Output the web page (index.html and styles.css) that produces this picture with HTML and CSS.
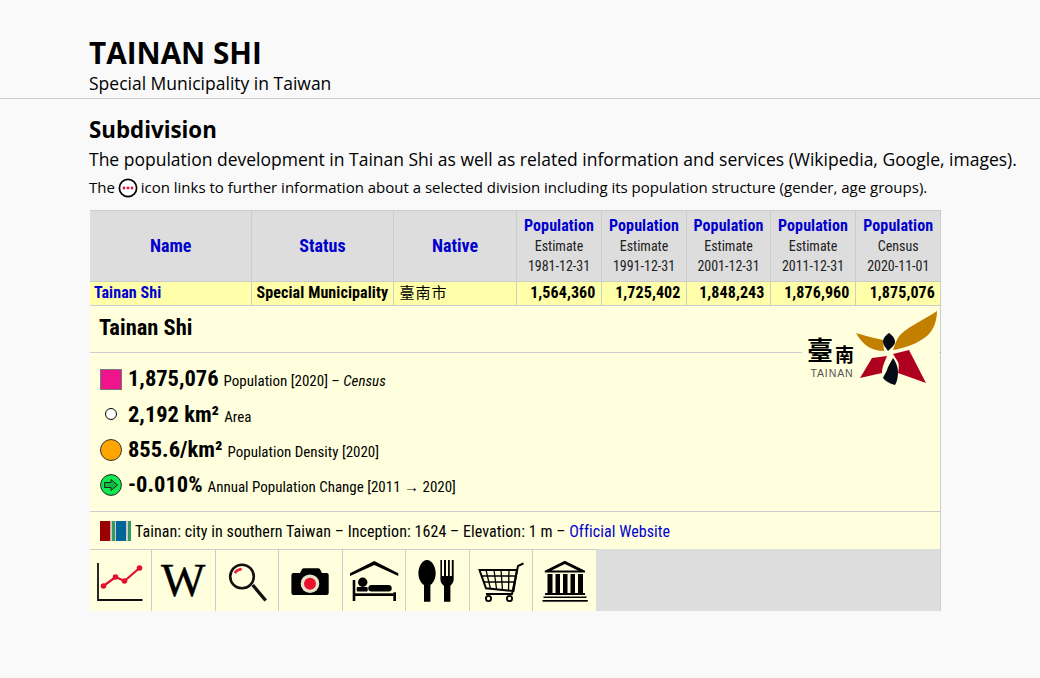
FILE: index.html
```html
<!DOCTYPE html>
<html lang="en">
<head>
<meta charset="UTF-8" />
<title>Tainan Shi</title>
<link rel="stylesheet" href="styles.css">
</head>
<body>

<header class="top">
  <h1>TAINAN SHI</h1>
  <div class="sub">Special Municipality in Taiwan</div>
</header>

<main class="content">
  <h2>Subdivision</h2>
  <p class="intro">The population development in Tainan Shi as well as related information and services (Wikipedia, Google, images).</p>
  <p class="note">The
    <svg class="more" width="20" height="20" viewBox="0 0 20 20"><circle cx="10" cy="10" r="8.6" fill="#fff" stroke="#000" stroke-width="1.7"/><circle cx="6" cy="10" r="1.4" fill="#e0103a"/><circle cx="10" cy="10" r="1.4" fill="#e0103a"/><circle cx="14" cy="10" r="1.4" fill="#e0103a"/></svg>
    icon links to further information about a selected division including its population structure (gender, age groups).</p>

  <div class="box">
    <table class="data">
      <colgroup>
        <col class="c-name"><col class="c-status"><col class="c-native">
        <col class="c-pop"><col class="c-pop"><col class="c-pop-narrow"><col class="c-pop"><col class="c-pop">
      </colgroup>
      <thead>
        <tr>
          <th><a href="#" class="big">Name</a></th>
          <th><a href="#" class="big">Status</a></th>
          <th><a href="#" class="big">Native</a></th>
          <th><a href="#">Population</a><span>Estimate</span><span>1981-12-31</span></th>
          <th><a href="#">Population</a><span>Estimate</span><span>1991-12-31</span></th>
          <th><a href="#">Population</a><span>Estimate</span><span>2001-12-31</span></th>
          <th><a href="#">Population</a><span>Estimate</span><span>2011-12-31</span></th>
          <th><a href="#">Population</a><span>Census</span><span>2020-11-01</span></th>
        </tr>
      </thead>
      <tbody>
        <tr>
          <td class="name"><a href="#">Tainan Shi</a></td>
          <td class="status">Special Municipality</td>
          <td class="native">臺南市</td>
          <td class="num">1,564,360</td>
          <td class="num">1,725,402</td>
          <td class="num">1,848,243</td>
          <td class="num">1,876,960</td>
          <td class="num">1,875,076</td>
        </tr>
      </tbody>
    </table>

    <section class="detail">
      <h3>Tainan Shi</h3>

      <div class="logo">
        <div class="logo-text"><span class="logo-cn"><span class="logo-tai">臺</span><span class="logo-nan">南</span></span><span class="logo-en">TAINAN</span></div>
        <!-- coordinates: page position minus (855,310) -->
        <svg width="84" height="76" viewBox="0 0 84 76">
          <path d="M1 23C10 26 20 28 28 30L29 41C18 41 8 36 1 23Z" fill="#c38000"/>
          <path d="M82 1C82 10 79 20 72 26C62 34 50 38 38 40C40 34 42 28 46 24C56 15 70 9 82 1Z" fill="#c38000"/>
          <path d="M34 23C37 25 40 28 40 32C40 35 36 38 33 41C31 38 28 35 28 32C28 28 31 25 34 23Z" fill="#050a14"/>
          <path d="M32 46L17 48L5 68L27 63C27 57 30 51 32 46Z" fill="#b00020"/>
          <path d="M38 44L54 40L71 73L43 63C44 58 44 54 43 52Z" fill="#b00020"/>
          <path d="M38 48C41 52 43 57 43 62C43 67 42 72 40 75C36 74 30 71 28 68C29 65 31 63 32 60C33 56 36 52 38 48Z" fill="#050a14"/>
        </svg>
      </div>

      <ul class="facts">
        <li>
          <span class="mark"><i class="sq"></i></span>
          <b>1,875,076</b> <small>Population [2020] – <em>Census</em></small>
        </li>
        <li>
          <span class="mark"><i class="dot"></i></span>
          <b>2,192 km²</b> <small>Area</small>
        </li>
        <li>
          <span class="mark"><i class="round"></i></span>
          <b>855.6/km²</b> <small>Population Density [2020]</small>
        </li>
        <li>
          <span class="mark">
            <svg width="22" height="22" viewBox="0 0 22 22"><circle cx="11" cy="11" r="10.4" fill="#10e850" stroke="#222" stroke-width="1"/><path d="M4.500 8.500H11V5.500L17.500 11L11 16.500V13.500H4.500Z" fill="#10b840" stroke="#222" stroke-width="1"/></svg>
          </span>
          <b>-0.010%</b> <small>Annual Population Change [2011 → 2020]</small>
        </li>
      </ul>

      <div class="wiki">
        <svg width="33" height="20" viewBox="0 0 33 20"><rect x="0" width="10.500" height="20" fill="#990000"/><rect x="10.500" width="1.500" height="20" fill="#cfcfc0"/><rect x="12" width="3" height="20" fill="#339966"/><rect x="15" width="1" height="20" fill="#cfcfc0"/><rect x="16" width="10" height="20" fill="#006699"/><rect x="26" width="2" height="20" fill="#cfcfc0"/><rect x="28" width="3" height="20" fill="#339966"/></svg>
        <span>Tainan: city in southern Taiwan – Inception: 1624 – Elevation: 1 m – <a href="#">Official Website</a></span>
      </div>
    </section>

    <nav class="tools">
      <a href="#" class="tool">
        <svg width="50" height="44" viewBox="0 0 50 44"><path d="M2 4V41H46.500" fill="none" stroke="#111" stroke-width="1.800"/><path d="M7.500 27L19.500 18L28.500 22L43.500 9" fill="none" stroke="#e01030" stroke-width="2.200"/><circle cx="7.500" cy="27" r="2.800" fill="#e01030"/><circle cx="19.500" cy="18" r="2.800" fill="#e01030"/><circle cx="28.500" cy="22" r="2.800" fill="#e01030"/><circle cx="43.500" cy="9" r="2.800" fill="#e01030"/></svg>
      </a>
      <a href="#" class="tool">
        <span class="wiki-w">W</span>
      </a>
      <a href="#" class="tool">
        <svg width="50" height="44" viewBox="0 0 50 44"><circle cx="20" cy="17.500" r="11.800" fill="none" stroke="#111" stroke-width="2.600"/><path d="M12.700 14C14 12 16.500 10.500 19.700 10" fill="none" stroke="#e8203c" stroke-width="2.400"/><path d="M30.700 26L43.700 41.500" stroke="#111" stroke-width="3.400"/></svg>
      </a>
      <a href="#" class="tool">
        <svg width="50" height="44" viewBox="0 0 50 44"><path d="M6.400 16Q6.400 14 8.400 14H15L17 10.300Q17.500 9.300 19 9.300H33Q34.500 9.300 35 10.300L37 14H41.700Q43.700 14 43.700 16V34Q43.700 36 41.700 36H8.400Q6.400 36 6.400 34Z" fill="#000"/><circle cx="25" cy="24.700" r="9.300" fill="#e8e4cc"/><circle cx="25" cy="24.700" r="6" fill="#e8102a"/></svg>
      </a>
      <a href="#" class="tool">
        <svg width="50" height="44" viewBox="0 0 50 44"><path d="M25.300 2L49.300 14.300V17L25.300 6L1 17V14.300Z" fill="#000"/><circle cx="13.700" cy="23.300" r="4.700" fill="#000"/><rect x="3.700" y="21" width="2.600" height="21" fill="#000"/><rect x="44.300" y="33.300" width="2.700" height="8.700" fill="#000"/><rect x="19.300" y="26" width="23.400" height="6.500" rx="3.200" fill="#000"/><rect x="7.700" y="28" width="11" height="4.500" rx="1" fill="#000"/><rect x="6" y="34.300" width="38.500" height="2.700" fill="#000"/></svg>
      </a>
      <a href="#" class="tool">
        <svg width="50" height="44" viewBox="0 0 50 44"><path d="M15 1C20 1 23.700 8 23.700 14C23.700 20 21 24 18.400 26V42.700H12V26C9 24 6.400 20 6.400 14C6.400 8 10 1 15 1Z" fill="#000"/><path d="M28.400 1H30V17H32V1H34V17H36V1H37.800V17H39.800V1H41.700V20C41.700 24 39.500 25 38.400 27V42.700H32V27C30.500 25 28.400 24 28.400 20Z" fill="#000"/></svg>
      </a>
      <a href="#" class="tool">
        <svg width="50" height="44" viewBox="0 0 50 44"><path d="M47.500 4.300L42 7L36 35H10" fill="none" stroke="#000" stroke-width="2"/><path d="M3.500 11H41L37.500 32L10 29.300Z" fill="none" stroke="#000" stroke-width="2"/><path d="M5.500 17H40M8 23H39M10 11L14.500 30M18 11L20.500 30M25 11L26.500 31M33 11L32.500 31" fill="none" stroke="#000" stroke-width="1.300"/><circle cx="12.500" cy="39.500" r="2.600" fill="none" stroke="#000" stroke-width="1.800"/><circle cx="33.500" cy="39.500" r="2.600" fill="none" stroke="#000" stroke-width="1.800"/></svg>
      </a>
      <a href="#" class="tool">
        <svg width="50" height="44" viewBox="0 0 50 44"><path d="M24.800 1.700L45 11.700V13.500H4.800V11.700Z" fill="#000"/><path d="M24.800 5L38 11.500H11.500Z" fill="#fdfddc"/><path d="M7.500 15H12.500V34H7.500ZM15.500 15H20V34H15.500ZM23 15H27.500V34H23ZM30.500 15H35V34H30.500ZM38 15H43V34H38Z" fill="#000"/><rect x="5" y="34" width="40" height="2" fill="#000"/><rect x="3.500" y="37.500" width="43" height="1.500" fill="#000"/><rect x="2.500" y="41" width="45.300" height="1.700" fill="#000"/></svg>
      </a>
    </nav>
  </div>
</main>

</body>
</html>
```

FILE: styles.css
```css
body {
  margin: 0;
  background: #f9f9f9;
  color: #000;
  font-family: 'Open Sans', sans-serif;
}
.top {
  height: 99px;
  padding: 35px 0 0 89px;
  box-sizing: border-box;
  border-bottom: 1px solid #ccc;
}
h1 {
  margin: 0;
  font-size: 29.700px;
  line-height: 36px;
  font-weight: 700;
}
.sub {
  font-size: 17.500px;
  line-height: 25px;
}
.content {
  padding: 16px 0 0 89px;
}
h2 {
  margin: 0;
  font-size: 22.300px;
  line-height: 30px;
  font-weight: 700;
}
.intro {
  margin: 1px 0 0;
  font-size: 17.500px;
  line-height: 26px;
  white-space: nowrap;
}
.note {
  margin: 4px 0 0;
  font-size: 15px;
  line-height: 22px;
  white-space: nowrap;
}
.more {
  margin: 0 -1px;
  vertical-align: -5px;
}
.box {
  width: 851px;
  margin: 12px 0 0 1px;
  box-sizing: border-box;
  background: #ddd;
  border-right: 1px solid #ccc;
  font-family: 'Roboto', sans-serif;
  font-stretch: condensed;
  letter-spacing: 0.100px;
}
a {
  color: #0000cd;
  text-decoration: none;
}
.data {
  width: 850px;
  table-layout: fixed;
  border-collapse: collapse;
}
.c-name { width: 161px; }
.c-status { width: 142px; }
.c-native { width: 123px; }
.c-pop { width: 85px; }
.c-pop-narrow { width: 84px; }
.data th {
  height: 70px;
  padding: 0 0 0 1px;
  background: #ddd;
  border-top: 1px solid #ccc;
  border-right: 1px solid #ccc;
  border-bottom: 1px solid #ccc;
  font-weight: 400;
  font-size: 14px;
  line-height: 20px;
}
.data th:last-child,
.data td:last-child {
  border-right: 0;
}
.data th a {
  display: block;
  font-size: 16px;
  font-weight: 700;
}
.data th a.big {
  font-size: 18px;
  letter-spacing: 0;
}
.data th span {
  display: block;
  color: #222;
  letter-spacing: 0;
}
.data td {
  height: 20px;
  padding: 0 5px 2px;
  background: #ffa;
  border-right: 1px solid #ccc;
  border-bottom: 1px solid #ccc;
  font-size: 16px;
  line-height: 20px;
  font-weight: 700;
  white-space: nowrap;
}
.data td.name {
  padding-left: 4px;
}
.data td.native {
  padding: 0 5px 3px 6px;
  font-family: 'Noto Sans CJK TC', sans-serif;
  font-size: 15px;
  line-height: 18px;
  letter-spacing: 1px;
  font-weight: 400;
  font-stretch: normal;
}
.data td.num {
  text-align: right;
}
.detail {
  position: relative;
  background: #ffd;
}
h3 {
  margin: 0;
  height: 46px;
  padding: 0 0 0 9px;
  border-bottom: 1px solid #ccc;
  font-size: 22.500px;
  line-height: 42px;
  font-weight: 700;
  letter-spacing: 0;
}
.logo {
  position: absolute;
  top: 4px;
  right: 1px;
  display: flex;
  align-items: flex-end;
  gap: 1px;
  background: #ffd;
}
.logo-text {
  display: flex;
  flex-direction: column;
  align-items: center;
  margin: 0 0 6px 5px;
}
.logo-cn {
  display: flex;
  align-items: flex-start;
  gap: 2px;
  height: 33px;
  font-family: 'Noto Sans CJK TC', serif;
  font-weight: 700;
  letter-spacing: 0;
  font-stretch: normal;
}
.logo-tai {
  font-size: 26px;
  line-height: 30px;
}
.logo-nan {
  margin-top: 10px;
  font-size: 19px;
  line-height: 20px;
}
.logo-en {
  padding-left: 3px;
  font-family: 'Liberation Sans', sans-serif;
  font-size: 10.500px;
  line-height: 13px;
  letter-spacing: 0.900px;
  color: #555;
  font-stretch: normal;
}
.facts {
  list-style: none;
  margin: 0;
  padding: 8px 0 0 10px;
  height: 159px;
  box-sizing: border-box;
  border-bottom: 1px solid #ccc;
  letter-spacing: 0;
}
.facts li {
  display: flex;
  align-items: baseline;
  gap: 5px;
  height: 35px;
  line-height: 35px;
}
.facts li:first-child {
  height: 36px;
}
.mark {
  display: flex;
  align-self: center;
  align-items: center;
  justify-content: center;
  width: 22px;
  height: 22px;
  margin-right: 1px;
}
.facts b {
  font-size: 22.500px;
}
.facts small {
  font-size: 15px;
}
.sq {
  width: 20px;
  height: 19px;
  background: #f0148c;
  border: 1px solid #777;
}
.dot {
  width: 10px;
  height: 10px;
  margin-top: -2px;
  background: #fff;
  border: 1px solid #000;
  border-radius: 50%;
}
.round {
  width: 20px;
  height: 20px;
  background: #ffa500;
  border: 1px solid #333;
  border-radius: 50%;
}
.wiki {
  display: flex;
  align-items: center;
  gap: 2px;
  height: 37px;
  padding-left: 10px;
  font-size: 16px;
  letter-spacing: 0.060px;
}
.wiki span {
  padding-top: 2px;
}
.tools {
  display: flex;
  height: 62px;
}
.tool {
  display: flex;
  align-items: center;
  justify-content: center;
  box-sizing: border-box;
  width: 63.500px;
  height: 62px;
  background: #ffd;
  border-top: 1px solid #ccc;
  border-right: 1px solid #ccc;
  color: #000;
}
.tool:first-child {
  width: 62px;
}
.tool:last-child {
  width: 63px;
  border-right: 0;
}
.wiki-w {
  margin-bottom: 2px;
  font-family: 'Liberation Serif', serif;
  font-size: 47px;
  line-height: 42px;
  -webkit-text-stroke: 0.400px #000;
}
```
